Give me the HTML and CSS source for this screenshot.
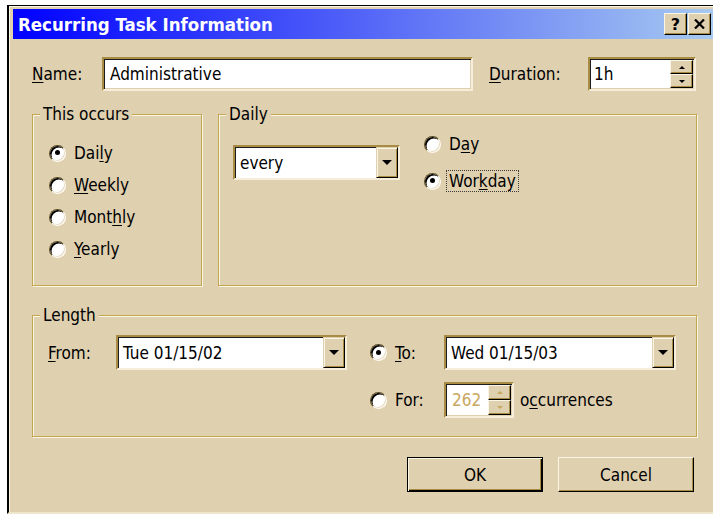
FILE: index.html
```html
<!DOCTYPE html>
<html lang="en">
<head>
<meta charset="utf-8">
<title>Recurring Task Information</title>
<link rel="stylesheet" href="styles.css">
</head>
<body>
<div class="window">
  <div class="titlebar">
    <span class="title">Recurring Task Information</span>
    <div class="caption-btns">
      <span class="cbtn help">?</span>
      <span class="cbtn close">
        <svg width="11" height="10" viewBox="0 0 11 10"><path d="M1 0.5 L10 9.5 M10 0.5 L1 9.5" stroke="#000" stroke-width="2.2" fill="none"/></svg>
      </span>
    </div>
  </div>

  <div class="client">
    <div class="row-name">
      <span class="lbl name-lbl"><u>N</u>ame:</span>
      <div class="edit name-edit">Administrative</div>
      <span class="lbl dur-lbl"><u>D</u>uration:</span>
      <div class="edit dur-edit">
        <span class="edit-val">1h</span>
        <div class="spin">
          <span class="sbtn"><i class="arr up"></i></span>
          <span class="sbtn"><i class="arr down"></i></span>
        </div>
      </div>
    </div>

    <div class="row-groups">
      <div class="group occurs">
        <span class="legend">This occurs</span>
        <div class="opt"><span class="radio on"></span><span class="opt-text">Dai<u>l</u>y</span></div>
        <div class="opt"><span class="radio"></span><span class="opt-text"><u>W</u>eekly</span></div>
        <div class="opt"><span class="radio"></span><span class="opt-text">Mont<u>h</u>ly</span></div>
        <div class="opt"><span class="radio"></span><span class="opt-text"><u>Y</u>early</span></div>
      </div>

      <div class="group daily">
        <span class="legend">Daily</span>
        <div class="combo every">
          <span class="combo-text">every</span>
          <span class="combo-btn"><i class="tri"></i></span>
        </div>
        <div class="daily-opts">
          <div class="opt small"><span class="radio"></span><span class="opt-text">D<u>a</u>y</span></div>
          <div class="opt small"><span class="radio on"></span><span class="opt-text focus">Wor<u>k</u>day</span></div>
        </div>
      </div>
    </div>

    <div class="group length">
      <span class="legend">Length</span>
      <div class="length-grid">
        <span class="lbl from-lbl"><u>F</u>rom:</span>
        <div class="combo">
          <span class="combo-text">Tue 01/15/02</span>
          <span class="combo-btn"><i class="tri"></i></span>
        </div>
        <div class="opt end-opt"><span class="radio on"></span><span class="opt-text"><u>T</u>o:</span></div>
        <div class="combo">
          <span class="combo-text">Wed 01/15/03</span>
          <span class="combo-btn"><i class="tri"></i></span>
        </div>

        <div class="opt end-opt for-opt"><span class="radio"></span><span class="opt-text">For:</span></div>
        <div class="count">
          <div class="edit count-edit disabled">
            <span class="edit-val">262</span>
            <div class="spin">
              <span class="sbtn"><i class="arr up"></i></span>
              <span class="sbtn"><i class="arr down"></i></span>
            </div>
          </div>
          <span class="lbl occ-lbl">o<u>c</u>currences</span>
        </div>
      </div>
    </div>

    <div class="buttons">
      <button class="btn default">OK</button>
      <button class="btn">Cancel</button>
    </div>
  </div>
</div>
</body>
</html>
```
FILE: styles.css
```css
:root {
  --face: #dfd0b0;
  --hi: #fbf5e6;
  --gold: #c4a650;
  --shade: #a88c44;
}

html, body {
  margin: 0;
  background: #fff;
  overflow: hidden;
}

body {
  font-family: "DejaVu Sans Condensed", "DejaVu Sans", sans-serif;
  font-stretch: condensed;
  font-size: 17px;
  color: #000;
}

u { text-decoration-thickness: 1px; text-underline-offset: 2px; }

/* dialog frame */
.window {
  margin: 5px 0 0 7px;
  width: 706px;
  height: 509px;
  box-sizing: border-box;
  background: var(--face);
  border-top: 1px solid #000;
  border-left: 2px solid #000;
  border-bottom: 2px solid #efe5cc;
  box-shadow: inset 1px 1px 0 var(--hi);
}

.titlebar {
  margin: 3px 0 0 4px;
  width: 700px;
  height: 30px;
  box-sizing: border-box;
  padding-left: 5px;
  display: flex;
  align-items: center;
  justify-content: space-between;
  background: linear-gradient(to right, #0000ff 0%, #a6caf0 100%);
}

.title {
  color: #fff;
  font-weight: bold;
  font-size: 18.5px;
}

.caption-btns {
  display: flex;
  gap: 1px;
  margin-right: 2px;
}

.cbtn {
  width: 23px;
  height: 22px;
  box-sizing: border-box;
  display: flex;
  align-items: center;
  justify-content: center;
  background: var(--face);
  border: 1px solid;
  border-color: var(--hi) #000 #000 var(--hi);
  box-shadow: inset -1px -1px 0 var(--shade);
  font-weight: bold;
  font-size: 16px;
  font-family: "DejaVu Sans", sans-serif;
  font-stretch: normal;
}

/* client area */
.client {
  width: 665px;
  padding: 18px 0 0 23px;
}

.row-name {
  display: flex;
  align-items: center;
  height: 34px;
}

.lbl { white-space: nowrap; }
.name-lbl { width: 70px; }
.dur-lbl { width: 99px; margin-left: 16px; }

.edit {
  height: 34px;
  box-sizing: border-box;
  display: flex;
  align-items: center;
  background: #fff;
  border: 2px solid;
  border-color: var(--shade) #f6eedb #f6eedb var(--shade);
  box-shadow: inset 1px 1px 0 #1c1c1c, inset -1px -1px 0 var(--face);
  padding-left: 6px;
}

.name-edit { width: 371px; }
.dur-edit { width: 108px; padding-left: 4px; }
.edit-val { flex: 1; }

.spin {
  align-self: stretch;
  width: 23px;
  display: flex;
  flex-direction: column;
  margin: 1px 1px 1px 0;
}

.sbtn {
  flex: 1;
  display: flex;
  align-items: center;
  justify-content: center;
  background: var(--face);
  border: 1px solid;
  border-color: var(--hi) #000 #000 var(--hi);
  box-shadow: inset -1px -1px 0 var(--shade);
}

.arr {
  width: 0;
  height: 0;
  border-left: 3px solid transparent;
  border-right: 3px solid transparent;
}
.arr.up { border-bottom: 3px solid #000; }
.arr.down { border-top: 3px solid #000; }

/* group boxes */
.row-groups {
  display: flex;
  gap: 16px;
  margin-top: 23px;
}

.group {
  position: relative;
  box-sizing: border-box;
  border: 1px solid var(--gold);
  box-shadow: 1px 1px 0 var(--hi), inset 1px 1px 0 var(--hi);
}

.legend {
  position: absolute;
  top: -11px;
  left: 7px;
  padding: 0 3px;
  line-height: 20px;
  background: var(--face);
}

.occurs {
  width: 170px;
  height: 172px;
  padding: 22px 0 0 16px;
}

.opt {
  display: flex;
  align-items: center;
  height: 32px;
}

.opt-text {
  margin-left: 5px;
  padding: 0 2px;
  border: 1px solid transparent;
  line-height: 20px;
}

.opt-text.focus { border: 1px dotted #3a3a3a; }

.radio {
  position: relative;
  flex: none;
  width: 17px;
  height: 17px;
  box-sizing: border-box;
  border-radius: 50%;
  background: #fff;
  border: 1.5px solid;
  border-color: #5c4a20 #fffaf0 #fffaf0 #5c4a20;
  box-shadow: inset 1.5px 1.5px 0 #000, inset -1px -1px 0 #e6dcc4;
}

.radio.on::after {
  content: "";
  position: absolute;
  left: 4.5px;
  top: 4.5px;
  width: 5px;
  height: 5px;
  border-radius: 50%;
  background: #000;
}

.daily {
  flex: 1;
  height: 172px;
  display: flex;
  align-items: flex-start;
  padding: 16px 0 0 14px;
}

.combo {
  height: 35px;
  box-sizing: border-box;
  display: flex;
  background: #fff;
  border: 2px solid;
  border-color: var(--shade) #f6eedb #f6eedb var(--shade);
  box-shadow: inset 1px 1px 0 #1c1c1c;
}

.combo.every {
  width: 167px;
  margin-top: 14px;
  margin-right: 24px;
}

.combo-text {
  flex: 1;
  display: flex;
  align-items: center;
  padding-left: 5px;
}

.combo-btn {
  width: 22px;
  box-sizing: border-box;
  display: flex;
  align-items: center;
  justify-content: center;
  background: var(--face);
  border: 1px solid;
  border-color: var(--face) #000 #000 var(--face);
  box-shadow: inset 1px 1px 0 var(--hi), inset -1px -1px 0 var(--shade);
}

.tri {
  width: 0;
  height: 0;
  border-left: 5px solid transparent;
  border-right: 5px solid transparent;
  border-top: 5px solid #000;
}

.daily-opts {
  margin-top: 1px;
  display: flex;
  flex-direction: column;
  gap: 13px;
}

.opt.small { height: 24px; }

.length {
  margin-top: 29px;
  width: 665px;
  height: 122px;
  padding: 19px 0 0 15px;
}

.length-grid {
  display: grid;
  grid-template-columns: 68px 231px 97px 232px;
  grid-template-rows: 35px 36px;
  row-gap: 12px;
  align-items: center;
}

.end-opt {
  padding-left: 23px;
  height: 100%;
}

.for-opt { grid-column: 3; }

.count {
  display: flex;
  align-items: center;
  height: 36px;
}

.count-edit {
  width: 70px;
  height: 36px;
}

.disabled .edit-val { color: #c8a860; }
.disabled .arr.up { border-bottom-color: #c8a860; }
.disabled .arr.down { border-top-color: #c8a860; }

.occ-lbl { margin-left: 6px; }

/* command buttons */
.buttons {
  display: flex;
  justify-content: flex-end;
  gap: 15px;
  margin-top: 20px;
  padding-right: 3px;
}

.btn {
  width: 136px;
  height: 35px;
  margin: 0;
  padding: 0;
  font: inherit;
  color: #000;
  background: var(--face);
  border: 1px solid;
  border-color: var(--hi) #000 #000 var(--hi);
  box-shadow: inset -1px -1px 0 var(--shade);
}

.btn.default {
  border-color: #000;
  box-shadow: inset 1px 1px 0 var(--hi), inset -1px -1px 0 #000, inset -2px -2px 0 var(--shade);
}
```
